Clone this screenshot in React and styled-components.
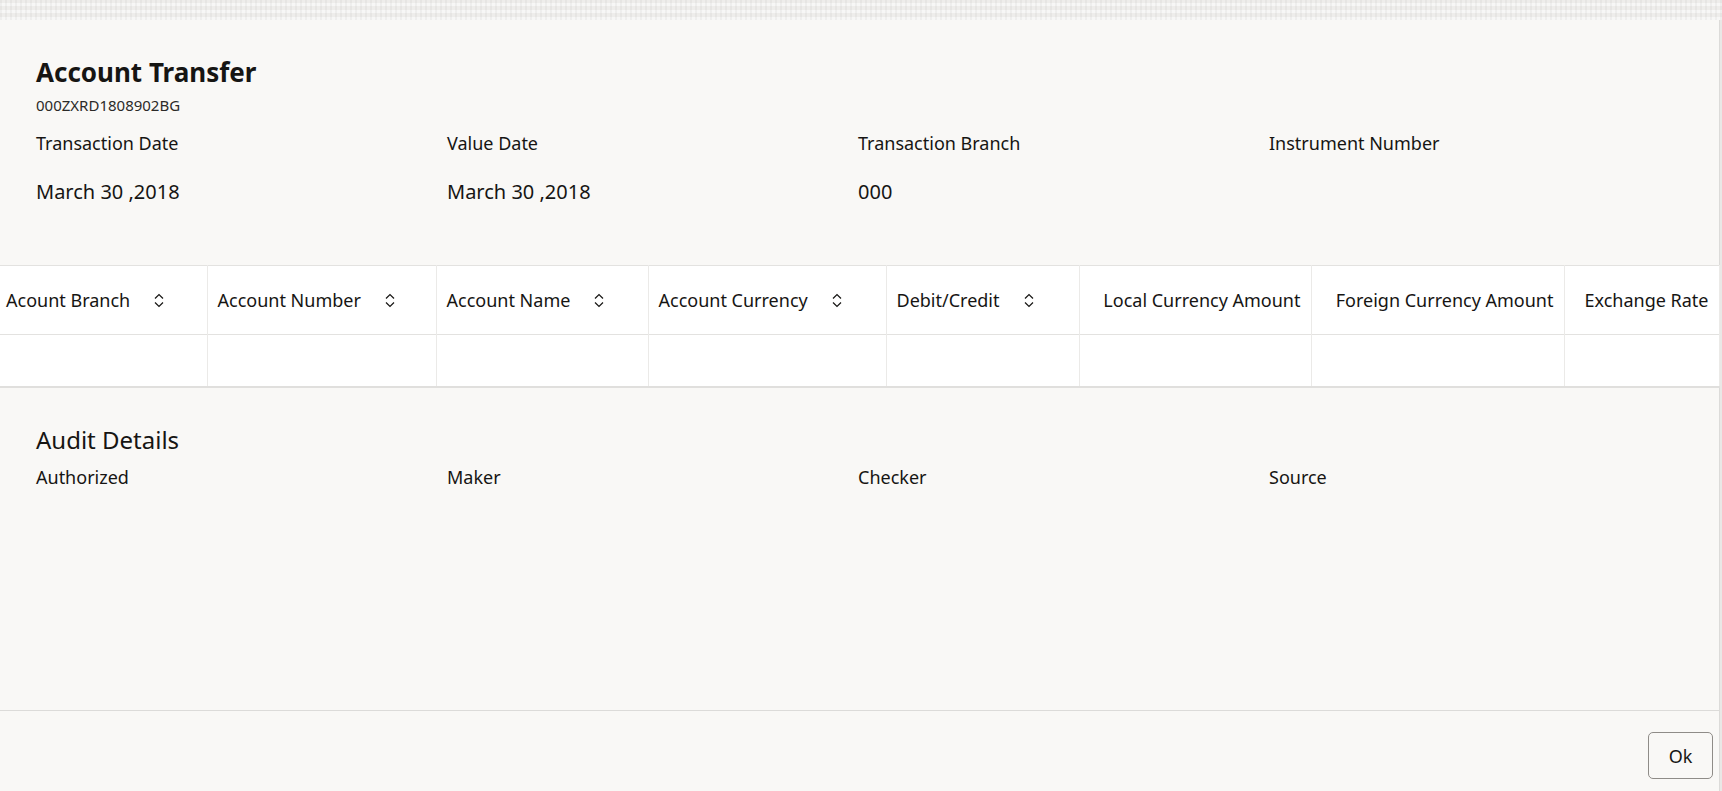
import React from 'react';
import styled, { createGlobalStyle } from 'styled-components';

const GlobalStyle = createGlobalStyle`
  html, body {
    margin: 0;
    padding: 0;
    background: #e9e8e6;
  }
  * {
    box-sizing: border-box;
  }
  body {
    font-family: 'Noto Sans', 'Open Sans', sans-serif;
    color: #161513;
  }
`;

const Page = styled.div`
  height: 100vh;
  display: flex;
  flex-direction: column;
`;

const TextureBand = styled.div`
  height: 20px;
  flex: none;
  background-color: #eeedeb;
  background-image:
    repeating-linear-gradient(90deg, rgba(0, 0, 0, 0.035) 0 2px, transparent 2px 5px),
    repeating-linear-gradient(0deg, rgba(255, 255, 255, 0.55) 0 3px, transparent 3px 7px);
`;

const Panel = styled.div`
  flex: 1;
  width: 1720px;
  display: flex;
  flex-direction: column;
  background: #f9f8f6;
  border-right: 1px solid #dcdbd9;
`;

const Content = styled.div`
  flex: 1;
`;

const Header = styled.div`
  padding: 36px 36px 0;
`;

const Title = styled.h1`
  margin: 0;
  font-size: 26px;
  line-height: 32px;
  font-weight: 700;
`;

const RefNo = styled.div`
  margin-top: 7px;
  font-size: 15px;
  line-height: 20px;
  color: #2b2a28;
`;

const FieldGrid = styled.div`
  display: grid;
  grid-template-columns: repeat(4, 411px);
  margin-top: ${(p) => p.$top || 0}px;
`;

const Field = styled.div`
  display: flex;
  flex-direction: column;
`;

const Label = styled.div`
  font-size: 18px;
  line-height: 24px;
`;

const Value = styled.div`
  margin-top: 23px;
  font-size: 20px;
  line-height: 28px;
  min-height: 28px;
`;

const Table = styled.table`
  margin-top: 59px;
  width: 1719px;
  table-layout: fixed;
  border-collapse: collapse;
  background: #ffffff;
`;

const HeadRow = styled.tr`
  border-top: 1px solid #e3e2e0;
  border-bottom: 1px solid #e3e2e0;
`;

const Th = styled.th`
  height: 69px;
  padding: 0 10px 0 ${(p) => (p.$first ? 6 : 10)}px;
  border-right: 1px solid #ebeae8;
  font-size: 18px;
  font-weight: 400;
  text-align: ${(p) => (p.$right ? 'right' : 'left')};
  white-space: nowrap;
  vertical-align: middle;
`;

const HeadInner = styled.span`
  display: inline-flex;
  align-items: center;
`;

const SortIcon = styled.svg`
  margin-left: 24px;
  width: 10px;
  height: 15px;
`;

const BodyRow = styled.tr`
  border-bottom: 2px solid #e0dfdd;
`;

const Td = styled.td`
  height: 52px;
  border-right: 1px solid #ebeae8;
`;

const Audit = styled.div`
  padding: 37px 36px 0;
`;

const AuditTitle = styled.h2`
  margin: 0;
  font-size: 24px;
  line-height: 30px;
  font-weight: 400;
`;

const Footer = styled.div`
  flex: none;
  display: flex;
  justify-content: flex-end;
  padding: 21px 6px 12px;
  border-top: 1px solid #dcdbd9;
`;

const OkButton = styled.button`
  width: 65px;
  height: 47px;
  border: 1px solid #8f8c88;
  border-radius: 5px;
  background: transparent;
  font-family: 'Noto Sans', sans-serif;
  font-size: 18px;
  color: #161513;
  cursor: pointer;
`;

const columns = [
  { name: 'Acount Branch', width: 207, sort: true },
  { name: 'Account Number', width: 229, sort: true },
  { name: 'Account Name', width: 212, sort: true },
  { name: 'Account Currency', width: 238, sort: true },
  { name: 'Debit/Credit', width: 193, sort: true },
  { name: 'Local Currency Amount', width: 232 },
  { name: 'Foreign Currency Amount', width: 253 },
  { name: 'Exchange Rate', width: 155 },
];

const details = [
  { label: 'Transaction Date', value: 'March 30 ,2018' },
  { label: 'Value Date', value: 'March 30 ,2018' },
  { label: 'Transaction Branch', value: '000' },
  { label: 'Instrument Number', value: '' },
];

const auditFields = ['Authorized', 'Maker', 'Checker', 'Source'];

function Sort() {
  return (
    <SortIcon viewBox="0 0 10 15" fill="none" stroke="#161513" strokeWidth="1.2">
      <path d="M1 5.5 L5 1.5 L9 5.5" />
      <path d="M1 9.5 L5 13.5 L9 9.5" />
    </SortIcon>
  );
}

export default function App() {
  return (
    <Page>
      <GlobalStyle />
      <TextureBand />
      <Panel>
        <Content>
          <Header>
            <Title>Account Transfer</Title>
            <RefNo>000ZXRD1808902BG</RefNo>
            <FieldGrid $top={16}>
              {details.map((d) => (
                <Field key={d.label}>
                  <Label>{d.label}</Label>
                  <Value>{d.value}</Value>
                </Field>
              ))}
            </FieldGrid>
          </Header>

          <Table>
            <colgroup>
              {columns.map((c) => (
                <col key={c.name} style={{ width: c.width }} />
              ))}
            </colgroup>
            <thead>
              <HeadRow>
                {columns.map((c, i) => (
                  <Th key={c.name} $first={i === 0} $right={!c.sort}>
                    <HeadInner>
                      {c.name}
                      {c.sort && <Sort />}
                    </HeadInner>
                  </Th>
                ))}
              </HeadRow>
            </thead>
            <tbody>
              <BodyRow>
                {columns.map((c) => (
                  <Td key={c.name} />
                ))}
              </BodyRow>
            </tbody>
          </Table>

          <Audit>
            <AuditTitle>Audit Details</AuditTitle>
            <FieldGrid $top={10}>
              {auditFields.map((f) => (
                <Field key={f}>
                  <Label>{f}</Label>
                </Field>
              ))}
            </FieldGrid>
          </Audit>
        </Content>
        <Footer>
          <OkButton>Ok</OkButton>
        </Footer>
      </Panel>
    </Page>
  );
}
